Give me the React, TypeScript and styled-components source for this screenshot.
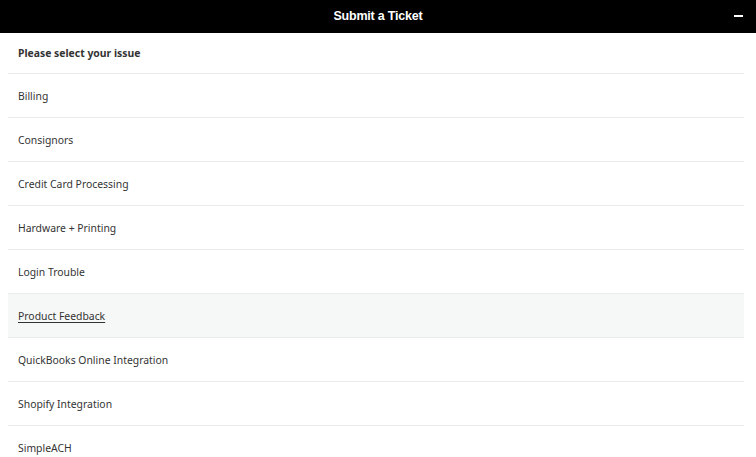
import React from "react";
import styled, { createGlobalStyle } from "styled-components";

const Global = createGlobalStyle`
  html, body { margin: 0; padding: 0; background: #ffffff; }
  body { font-family: "Noto Sans", "Open Sans", sans-serif; }
`;

const Panel = styled.div`
  width: 756px;
  height: 457px;
  overflow: hidden;
  display: flex;
  flex-direction: column;
  background: #ffffff;
`;

const TitleBar = styled.div`
  height: 33px;
  flex: none;
  background: #000000;
  color: #ffffff;
  display: flex;
  align-items: center;
  justify-content: center;
  position: relative;
`;

const Title = styled.span`
  font-family: "Liberation Sans", Arial, sans-serif;
  font-weight: 700;
  font-size: 12.5px;
  letter-spacing: -0.2px;
  margin-top: -1px;
`;

const Minimize = styled.span`
  position: absolute;
  right: 13px;
  top: 15px;
  width: 9px;
  height: 2px;
  background: #ffffff;
`;

const List = styled.div`
  display: flex;
  flex-direction: column;
  padding: 0 12px 0 8px;
`;

const Row = styled.div<{ $head?: boolean; $active?: boolean }>`
  height: ${(p) => (p.$head ? 41 : 44)}px;
  flex: none;
  display: flex;
  align-items: center;
  padding-left: 10px;
  border-bottom: 1px solid #e9ecea;
  box-sizing: border-box;
  background: ${(p) => (p.$active ? "#f6f8f7" : "transparent")};
  color: #333333;
  font-size: 10.4px;
  font-weight: ${(p) => (p.$head ? 700 : 400)};
  text-decoration: ${(p) => (p.$active ? "underline" : "none")};
  text-underline-offset: 2px;
`;

const items = [
  "Billing",
  "Consignors",
  "Credit Card Processing",
  "Hardware + Printing",
  "Login Trouble",
  "Product Feedback",
  "QuickBooks Online Integration",
  "Shopify Integration",
  "SimpleACH",
];

export default function App() {
  return (
    <>
      <Global />
      <Panel>
        <TitleBar>
          <Title>Submit a Ticket</Title>
          <Minimize />
        </TitleBar>
        <List>
          <Row $head>Please select your issue</Row>
          {items.map((t) => (
            <Row key={t} $active={t === "Product Feedback"}>
              {t}
            </Row>
          ))}
        </List>
      </Panel>
    </>
  );
}
